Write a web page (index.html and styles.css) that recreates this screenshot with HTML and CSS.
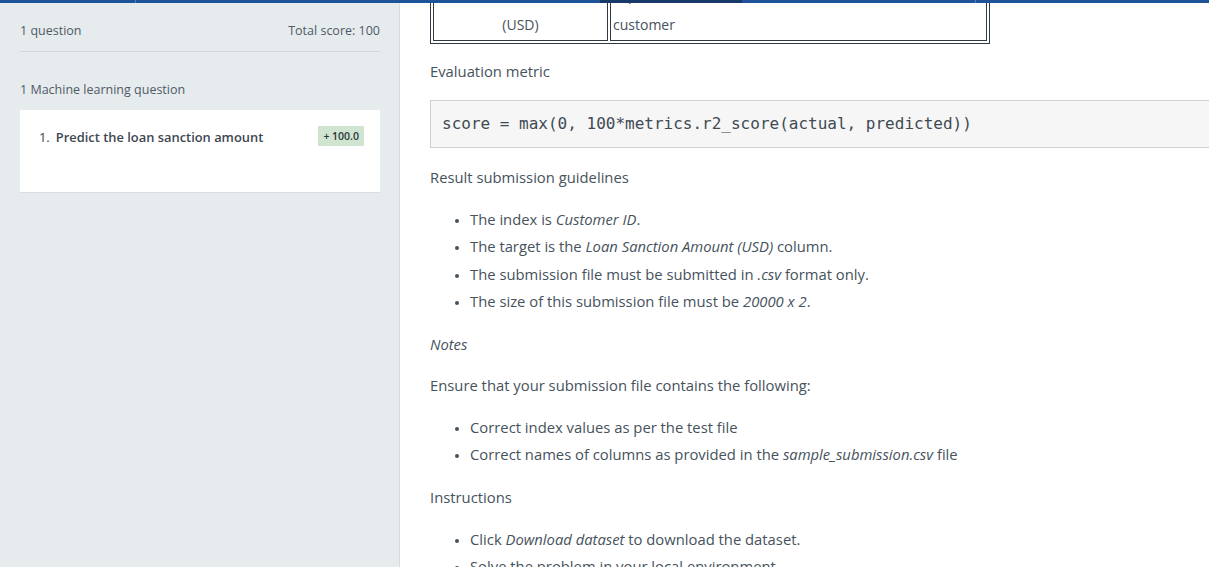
FILE: index.html
```html
<!DOCTYPE html>
<html>
<head>
<meta charset="utf-8">
<link rel="stylesheet" href="styles.css">
</head>
<body>
<div class="topbar">
  <div class="seg seg-a"></div>
  <div class="seg seg-b"></div>
  <div class="seg seg-c"></div>
  <div class="seg seg-d"></div>
  <div class="seg seg-e"></div>
</div>
<div class="layout">
  <aside class="sidebar">
    <div class="summary">
      <span>1 question</span>
      <span>Total score: 100</span>
    </div>
    <div class="section-title">1 Machine learning question</div>
    <div class="qcard">
      <div class="qrow">
        <span class="qtitle"><span class="qnum">1.</span>Predict the loan sanction amount</span>
        <span class="badge">+ 100.0</span>
      </div>
    </div>
  </aside>
  <main class="content">
    <div class="inner">
      <table class="data" border="1" cellspacing="2">
        <tr>
          <td class="c1">Loan Sanction Amount<br>(USD)</td>
          <td class="c2">Expected loan amount for the<br>customer</td>
        </tr>
      </table>
      <p class="heading">Evaluation metric</p>
      <pre class="code">score = max(0, 100*metrics.r2_score(actual, predicted))</pre>
      <p class="heading">Result submission guidelines</p>
      <ul>
        <li>The index is <em>Customer ID</em>.</li>
        <li>The target is the <em>Loan Sanction Amount (USD)</em> column.</li>
        <li>The submission file must be submitted in <em>.csv</em> format only.</li>
        <li>The size of this submission file must be <em>20000 x 2</em>.</li>
      </ul>
      <p class="para"><em>Notes</em></p>
      <p class="para">Ensure that your submission file contains the following:</p>
      <ul>
        <li>Correct index values as per the test file</li>
        <li>Correct names of columns as provided in the <em>sample_submission.csv</em> file</li>
      </ul>
      <p class="heading">Instructions</p>
      <ul>
        <li>Click <em>Download dataset</em> to download the dataset.</li>
        <li>Solve the problem in your local environment.</li>
      </ul>
    </div>
  </main>
</div>
</body>
</html>
```
FILE: styles.css
```css
html, body {
  margin: 0;
  padding: 0;
  height: 100%;
  overflow: hidden;
}
body {
  font-family: "Open Sans", Lato, sans-serif;
  color: #46525c;
  background: #fff;
}
.topbar {
  position: fixed;
  top: 0;
  left: 0;
  right: 0;
  height: 3px;
  display: flex;
  z-index: 5;
}
.seg { height: 3px; background: #1f5399; }
.seg-a { width: 135px; border-right: 1px solid #5a83bb; }
.seg-b { width: 464px; }
.seg-c { width: 142px; background: #173a68; }
.seg-d { width: 233px; border-right: 1px solid #5a83bb; }
.seg-e { flex: 1; }

.layout {
  display: flex;
  height: 100%;
}
.sidebar {
  width: 360px;
  flex: none;
  background: #e6ebee;
  border-right: 1px solid #d4dadf;
  padding: 0 19px 0 20px;
  font-size: 12.5px;
  color: #505a64;
}
.summary {
  display: flex;
  justify-content: space-between;
  height: 51px;
  line-height: 62px;
  border-bottom: 1px solid #d2d8dd;
}
.section-title {
  margin-top: 29px;
  line-height: 18px;
  height: 29px;
}
.qcard {
  background: #fff;
  height: 83px;
  border-bottom: 1px solid #d8dde1;
  padding: 16px 16px 0 19px;
  box-sizing: border-box;
}
.qrow {
  display: flex;
  justify-content: space-between;
  align-items: flex-start;
}
.qtitle {
  font-weight: 600;
  color: #3d4752;
  font-size: 12.9px;
  margin-top: 2px;
}
.qnum {
  font-weight: 400;
  margin-right: 6px;
}
.badge {
  background: #cfe5cf;
  color: #2b3640;
  font-size: 10.5px;
  font-weight: 600;
  line-height: 20px;
  height: 20px;
  padding: 0 5px;
}

.content {
  flex: 1;
  overflow: hidden;
  min-width: 0;
}
.inner {
  padding-left: 30px;
  width: 900px;
}
.data {
  border-collapse: separate;
  border: 1px solid #2f3a44;
  margin-top: -24px;
  font-size: 14px;
  color: #46525c;
}
.data td {
  border: 1px solid #2f3a44;
  padding: 0 2px;
  line-height: 30px;
  vertical-align: top;
}
.c1 { width: 169px; text-align: center; }
.c2 { width: 371px; }

.heading, .para {
  font-size: 14.8px;
  margin: 0;
  line-height: 20px;
}
.heading { margin-top: 19px; }
.data + .heading { margin-top: 17px; }
.para { margin-top: 21px; }
.code {
  margin: 19px 0 0 0;
  width: 840px;
  background: #f6f6f6;
  border: 1px solid #cfcfcf;
  font-family: "DejaVu Sans Mono", monospace;
  font-size: 16px;
  line-height: 20px;
  padding: 13px 11px 13px 11px;
  color: #3f4a54;
}
.code + .heading { margin-top: 19px; }
ul {
  margin: 22px 0 0 0;
  padding-left: 40px;
  font-size: 14.8px;
  list-style: disc;
}
li {
  line-height: 20px;
  margin-bottom: 7.3px;
}
li::marker { font-size: 11px; }
ul + .para, ul + .heading { margin-top: 23px; }
```
